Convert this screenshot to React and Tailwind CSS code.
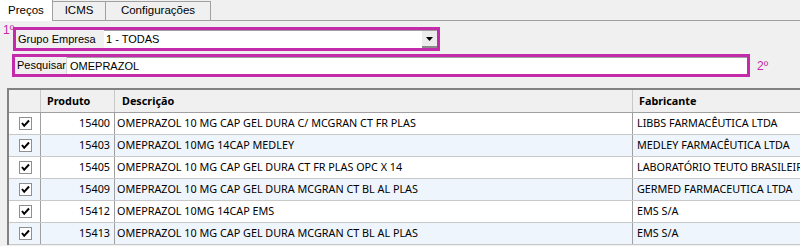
import React from 'react';

const rows = [
  { id: '15400', desc: 'OMEPRAZOL 10 MG CAP GEL DURA C/ MCGRAN CT FR PLAS', fab: 'LIBBS FARMACÊUTICA LTDA' },
  { id: '15403', desc: 'OMEPRAZOL 10MG 14CAP MEDLEY', fab: 'MEDLEY FARMACÊUTICA LTDA' },
  { id: '15405', desc: 'OMEPRAZOL 10 MG CAP GEL DURA CT FR PLAS OPC X 14', fab: 'LABORATÓRIO TEUTO BRASILEIRO' },
  { id: '15409', desc: 'OMEPRAZOL 10 MG CAP GEL DURA MCGRAN CT BL AL PLAS', fab: 'GERMED FARMACEUTICA LTDA' },
  { id: '15412', desc: 'OMEPRAZOL 10MG 14CAP EMS', fab: 'EMS S/A' },
  { id: '15413', desc: 'OMEPRAZOL 10 MG CAP GEL DURA MCGRAN CT BL AL PLAS', fab: 'EMS S/A' }
];

function Check() {
  return (
    <div className="w-[13px] h-[13px] bg-white border border-[#8e8f8f] flex items-center justify-center">
      <svg width="9" height="9" viewBox="0 0 9 9">
        <path d="M1 4 L3.2 6.8 L8 1.5" fill="none" stroke="#000" strokeWidth="2" />
      </svg>
    </div>
  );
}

export default function App() {
  return (
    <div className="w-[800px] h-[246px] bg-[#f0f0f0] overflow-hidden font-['Liberation_Sans',Arial,sans-serif] text-[11px] text-black">
      {/* Tabs */}
      <div className="h-[21px] flex items-end border-b border-[#a0a0a0]">
        <div className="h-[21px] w-[53px] bg-white border-r border-[#a0a0a0] -mb-px flex items-center pl-[8px] text-[11.5px]">
          Preços
        </div>
        <div className="h-[19px] w-[53px] bg-[#f0f0f0] border-t border-r border-[#a0a0a0] flex items-center justify-center text-[11.5px]">
          ICMS
        </div>
        <div className="h-[19px] w-[105px] bg-[#f0f0f0] border-t border-r border-[#a0a0a0] flex items-center justify-center text-[11.5px]">
          Configurações
        </div>
      </div>

      {/* Filters */}
      <div className="relative h-[67px]">
        <span className="absolute left-[3px] top-[0px] text-[12px] text-[#c42bab]">1º</span>
        <div className="pt-[6px] pl-[13px]">
          <div className="w-[427px] h-[24px] border-[3px] border-[#c42bab] flex">
            <div className="w-[88px] flex items-center pl-[2px]">Grupo Empresa</div>
            <div className="flex-1 bg-white border-t border-[#a0a0a0] flex items-center">
              <span className="flex-1 pl-[2px]">1 - TODAS</span>
              <div className="w-[15px] h-[17px] bg-[#ececec] border-b-2 border-[#8a8a8a] flex items-center justify-center">
                <svg width="7" height="4" viewBox="0 0 7 4">
                  <path d="M0 0 H7 L3.5 4 Z" fill="#000" />
                </svg>
              </div>
            </div>
          </div>
        </div>
        <div className="pt-[3px] pl-[12px] flex items-center">
          <div className="w-[738px] h-[23px] border-[3px] border-[#c42bab] flex">
            <div className="w-[52px] flex items-center pl-[2px] border-r border-[#d8d8d8]">Pesquisar</div>
            <div className="flex-1 bg-white border-t border-[#a0a0a0] flex items-center pl-[3px]">
              OMEPRAZOL
            </div>
          </div>
          <span className="ml-[7px] text-[12px] text-[#c42bab]">2º</span>
        </div>
      </div>

      {/* Grid */}
      <div className="ml-[7px] border-t-2 border-l-2 border-[#828282] bg-white font-['Noto_Sans',sans-serif] text-[10.8px]">
        <div className="h-[23px] flex bg-[#f0f0f0] border-b border-[#a0a0a0] font-bold">
          <div className="w-[32px] border-r border-[#c8c8c8]" />
          <div className="w-[74px] border-r border-[#c8c8c8] flex items-center pl-[6px]">Produto</div>
          <div className="w-[518px] border-r border-[#c8c8c8] flex items-center pl-[7px]">Descrição</div>
          <div className="flex-1 flex items-center pl-[6px]">Fabricante</div>
        </div>
        {rows.map((r, i) => (
          <div
            key={r.id}
            className={`h-[22px] flex border-b border-[#c8c8c8] ${i % 2 ? 'bg-[#eef5fc]' : 'bg-white'}`}
          >
            <div className="w-[32px] border-r border-[#a0a0a0] flex items-center pl-[10px]">
              <Check />
            </div>
            <div className="w-[74px] border-r border-[#a0a0a0] flex items-center justify-end pr-[4px]">{r.id}</div>
            <div className="w-[518px] border-r border-[#a0a0a0] flex items-center pl-[2px] whitespace-nowrap overflow-hidden">{r.desc}</div>
            <div className="flex-1 flex items-center pl-[4px] whitespace-nowrap overflow-hidden">{r.fab}</div>
          </div>
        ))}
      </div>
    </div>
  );
}
